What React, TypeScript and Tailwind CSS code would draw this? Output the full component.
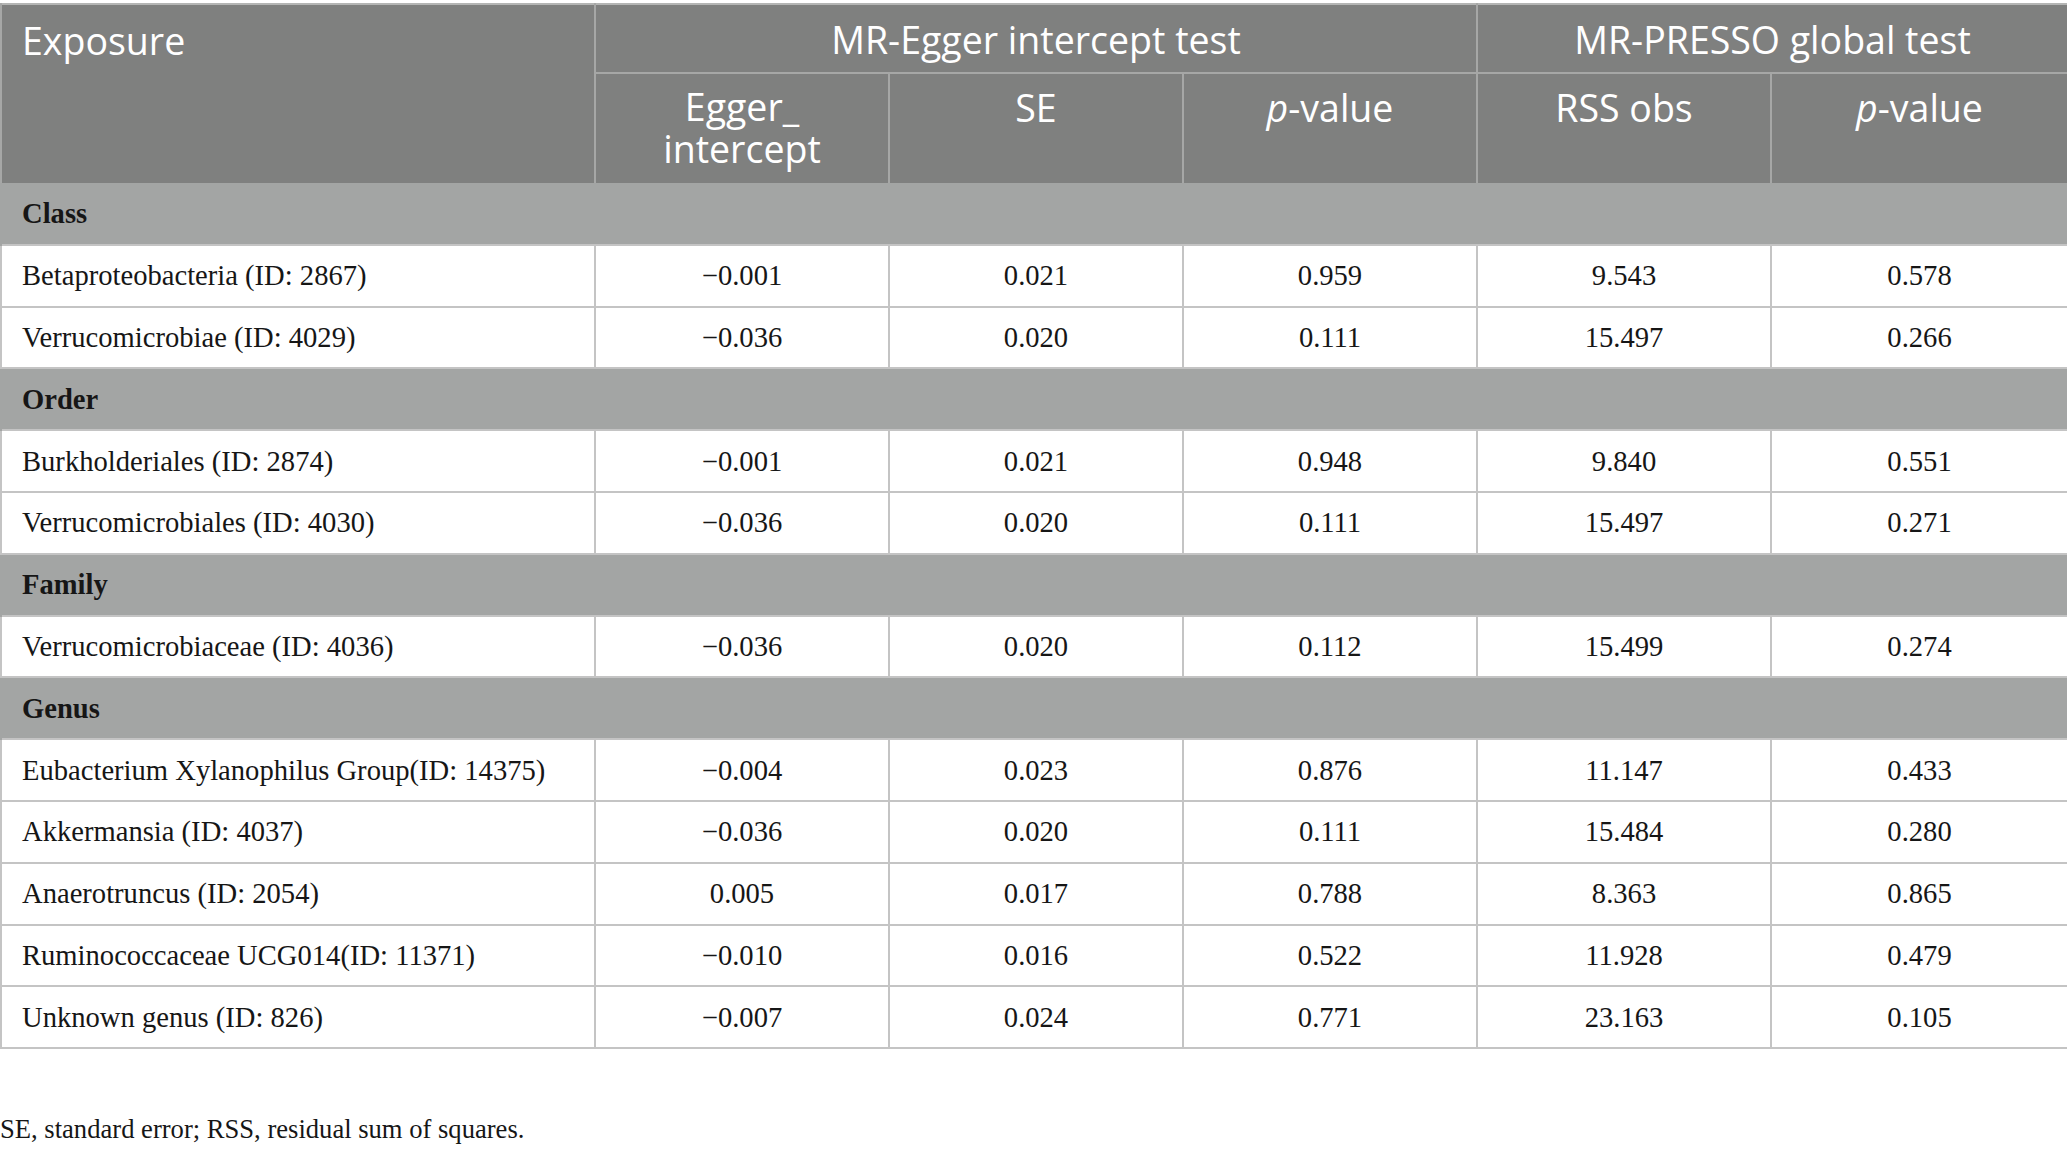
import React from "react";

type Row = { kind: "section"; label: string } | { kind: "data"; cells: string[] };

const rows: Row[] = [
  { kind: "section", label: "Class" },
  { kind: "data", cells: ["Betaproteobacteria (ID: 2867)", "\u22120.001", "0.021", "0.959", "9.543", "0.578"] },
  { kind: "data", cells: ["Verrucomicrobiae (ID: 4029)", "\u22120.036", "0.020", "0.111", "15.497", "0.266"] },
  { kind: "section", label: "Order" },
  { kind: "data", cells: ["Burkholderiales (ID: 2874)", "\u22120.001", "0.021", "0.948", "9.840", "0.551"] },
  { kind: "data", cells: ["Verrucomicrobiales (ID: 4030)", "\u22120.036", "0.020", "0.111", "15.497", "0.271"] },
  { kind: "section", label: "Family" },
  { kind: "data", cells: ["Verrucomicrobiaceae (ID: 4036)", "\u22120.036", "0.020", "0.112", "15.499", "0.274"] },
  { kind: "section", label: "Genus" },
  { kind: "data", cells: ["Eubacterium Xylanophilus Group(ID: 14375)", "\u22120.004", "0.023", "0.876", "11.147", "0.433"] },
  { kind: "data", cells: ["Akkermansia (ID: 4037)", "\u22120.036", "0.020", "0.111", "15.484", "0.280"] },
  { kind: "data", cells: ["Anaerotruncus (ID: 2054)", "0.005", "0.017", "0.788", "8.363", "0.865"] },
  { kind: "data", cells: ["Ruminococcaceae UCG014(ID: 11371)", "\u22120.010", "0.016", "0.522", "11.928", "0.479"] },
  { kind: "data", cells: ["Unknown genus (ID: 826)", "\u22120.007", "0.024", "0.771", "23.163", "0.105"] },
];

const sans = "font-['Open_Sans','Noto_Sans',sans-serif]";
const serif = "font-['Liberation_Serif','Times_New_Roman',serif]";

export default function App() {
  return (
    <div className="w-[2067px] h-[1150px] bg-white pt-[3px]">
      <table className="w-[2067px] table-fixed border-collapse">
        <colgroup>
          <col className="w-[594px]" />
          <col className="w-[294px]" />
          <col className="w-[294px]" />
          <col className="w-[294px]" />
          <col className="w-[294px]" />
          <col className="w-[297px]" />
        </colgroup>
        <thead className={`${sans} text-white text-[37.5px] leading-[41px]`}>
          <tr className="h-[69px] bg-[#7f807f] border-t-2 border-[#b4b5b4]">
            <th
              rowSpan={2}
              className="align-top text-left font-normal pl-[20px] pt-[15px] border-l-2 border-r-2 border-[#a6a7a6]"
            >
              Exposure
            </th>
            <th colSpan={3} className="font-normal text-center border-r-2 border-b-2 border-[#a6a7a6] pt-[1px]">
              MR-Egger intercept test
            </th>
            <th colSpan={2} className="font-normal text-center border-r-2 border-b-2 border-[#a6a7a6] pt-[1px]">
              MR-PRESSO global test
            </th>
          </tr>
          <tr className="h-[110px] bg-[#7f807f]">
            <th className="font-normal align-top text-center pt-[12px] border-r-2 border-[#a6a7a6]">
              <div className="leading-[42px]">Egger_</div>
              <div className="leading-[42px]">intercept</div>
            </th>
            <th className="font-normal align-top text-center pt-[13px] border-r-2 border-[#a6a7a6]">SE</th>
            <th className="font-normal align-top text-center pt-[13px] border-r-2 border-[#a6a7a6]">
              <i>p</i>-value
            </th>
            <th className="font-normal align-top text-center pt-[13px] border-r-2 border-[#a6a7a6]">RSS obs</th>
            <th className="font-normal align-top text-center pt-[13px] border-r-2 border-[#a6a7a6]">
              <i>p</i>-value
            </th>
          </tr>
        </thead>
        <tbody className={`${serif} text-[28.6px] text-[#161616]`}>
          {rows.map((r, i) =>
            r.kind === "section" ? (
              <tr key={i} className="h-[61.8px] bg-[#a3a5a4] border-b-2 border-[#c4c4c4]">
                <td colSpan={6} className="pl-[20px] pt-[2px] font-bold border-l-2 border-r-2 border-[#a3a5a4]">
                  {r.label}
                </td>
              </tr>
            ) : (
              <tr key={i} className="h-[61.8px] border-b-2 border-[#c4c4c4]">
                {r.cells.map((c, j) => (
                  <td
                    key={j}
                    className={`border-r-2 border-[#c4c4c4] pt-[2px] ${j === 0 ? "pl-[20px] text-left border-l-2" : "text-center"}`}
                  >
                    {c}
                  </td>
                ))}
              </tr>
            )
          )}
        </tbody>
      </table>
      <p className={`${serif} text-[26.6px] text-[#161616] mt-[61px]`}>
        SE, standard error; RSS, residual sum of squares.
      </p>
    </div>
  );
}
